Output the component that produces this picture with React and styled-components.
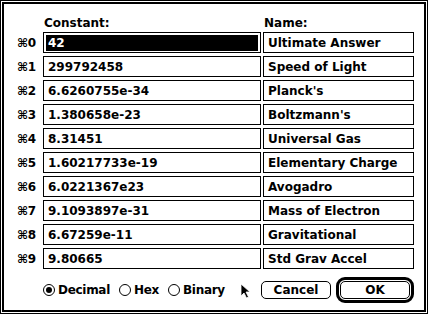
import React from "react";
import styled, { createGlobalStyle } from "styled-components";

const Global = createGlobalStyle`
  html, body { margin: 0; padding: 0; background: #fff; }
  body { font-family: "DejaVu Sans", "Liberation Sans", sans-serif; }
  * { box-sizing: border-box; }
`;

const Dialog = styled.div`
  width: 428px;
  height: 314px;
  border: 1px solid #000;
  padding: 1px;
  background: #fff;
`;

const Frame = styled.div`
  height: 100%;
  border: 2px solid #000;
  padding: 11px 10px 0 13px;
  font-weight: bold;
  font-size: 12px;
  line-height: 16px;
  color: #000;
  display: flex;
  flex-direction: column;
`;

const Grid = styled.div`
  display: grid;
  grid-template-columns: 24px 218px 151px;
  column-gap: 2px;
  row-gap: ${(p) => p.$rowGap || 0}px;
`;

const HeaderLabel = styled.div`
  height: 16px;
  padding-left: 1px;
  margin-bottom: 1px;
  grid-column: ${(p) => p.$col};
`;

const Key = styled.div`
  height: 21px;
  padding-top: 3px;
  white-space: nowrap;
  letter-spacing: -0.5px;
`;

const Field = styled.div`
  height: 21px;
  border: 1px solid #000;
  padding: 2px 2px 1px 2px;
`;

const FieldText = styled.div`
  height: 16px;
  padding-left: 2px;
  white-space: nowrap;
  overflow: hidden;
  background: ${(p) => (p.$selected ? "#000" : "transparent")};
  color: ${(p) => (p.$selected ? "#fff" : "#000")};
`;

const BottomRow = styled.div`
  position: relative;
  margin-top: 8px;
  padding-left: 26px;
  height: 26px;
  display: flex;
  align-items: center;
`;

const Radios = styled.div`
  display: flex;
  align-items: center;
  gap: 9px;
`;

const Radio = styled.label`
  display: flex;
  align-items: center;
  gap: 3px;
  white-space: nowrap;
  letter-spacing: -0.3px;
`;

const RadioCircle = styled.span`
  position: relative;
  width: 12px;
  height: 12px;
  border: 1px solid #000;
  border-radius: 50%;
  background: #fff;
  &::after {
    content: "";
    display: ${(p) => (p.$on ? "block" : "none")};
    position: absolute;
    left: 2px;
    top: 2px;
    width: 6px;
    height: 6px;
    border-radius: 50%;
    background: #000;
  }
`;

const Buttons = styled.div`
  margin-left: auto;
  display: flex;
  align-items: center;
  gap: 5px;
`;

const Button = styled.div`
  width: 70px;
  height: 18px;
  border: 1px solid #000;
  border-radius: 5px;
  background: #fff;
  text-align: center;
  line-height: 16px;
`;

const DefaultRing = styled.div`
  padding: 1px;
  border: 3px solid #000;
  border-radius: 9px;
`;

const Cursor = styled.svg`
  position: absolute;
  left: 223px;
  top: 6px;
`;

const constants = [
  ["42", "Ultimate Answer"],
  ["299792458", "Speed of Light"],
  ["6.6260755e-34", "Planck's"],
  ["1.380658e-23", "Boltzmann's"],
  ["8.31451", "Universal Gas"],
  ["1.60217733e-19", "Elementary Charge"],
  ["6.0221367e23", "Avogadro"],
  ["9.1093897e-31", "Mass of Electron"],
  ["6.67259e-11", "Gravitational"],
  ["9.80665", "Std Grav Accel"],
];

export default function App() {
  return (
    <>
      <Global />
      <Dialog>
        <Frame>
          <Grid>
            <HeaderLabel $col={2}>Constant:</HeaderLabel>
            <HeaderLabel $col={3}>Name:</HeaderLabel>
          </Grid>
          <Grid $rowGap={3}>
            {constants.map(([value, name], i) => (
              <React.Fragment key={i}>
                <Key>{"\u2318" + i}</Key>
                <Field>
                  <FieldText $selected={i === 0}>{value}</FieldText>
                </Field>
                <Field>
                  <FieldText>{name}</FieldText>
                </Field>
              </React.Fragment>
            ))}
          </Grid>
          <BottomRow>
            <Radios>
              <Radio>
                <RadioCircle $on />
                Decimal
              </Radio>
              <Radio>
                <RadioCircle />
                Hex
              </Radio>
              <Radio>
                <RadioCircle />
                Binary
              </Radio>
            </Radios>
            <Cursor width="11" height="16" viewBox="0 0 11 16">
              <path d="M1 1 L1 13 L4 10 L6.5 15 L8.5 14 L6 9 L10 9 Z" fill="#000" stroke="#fff" strokeWidth="0.8" />
            </Cursor>
            <Buttons>
              <Button>Cancel</Button>
              <DefaultRing>
                <Button>OK</Button>
              </DefaultRing>
            </Buttons>
          </BottomRow>
        </Frame>
      </Dialog>
    </>
  );
}
